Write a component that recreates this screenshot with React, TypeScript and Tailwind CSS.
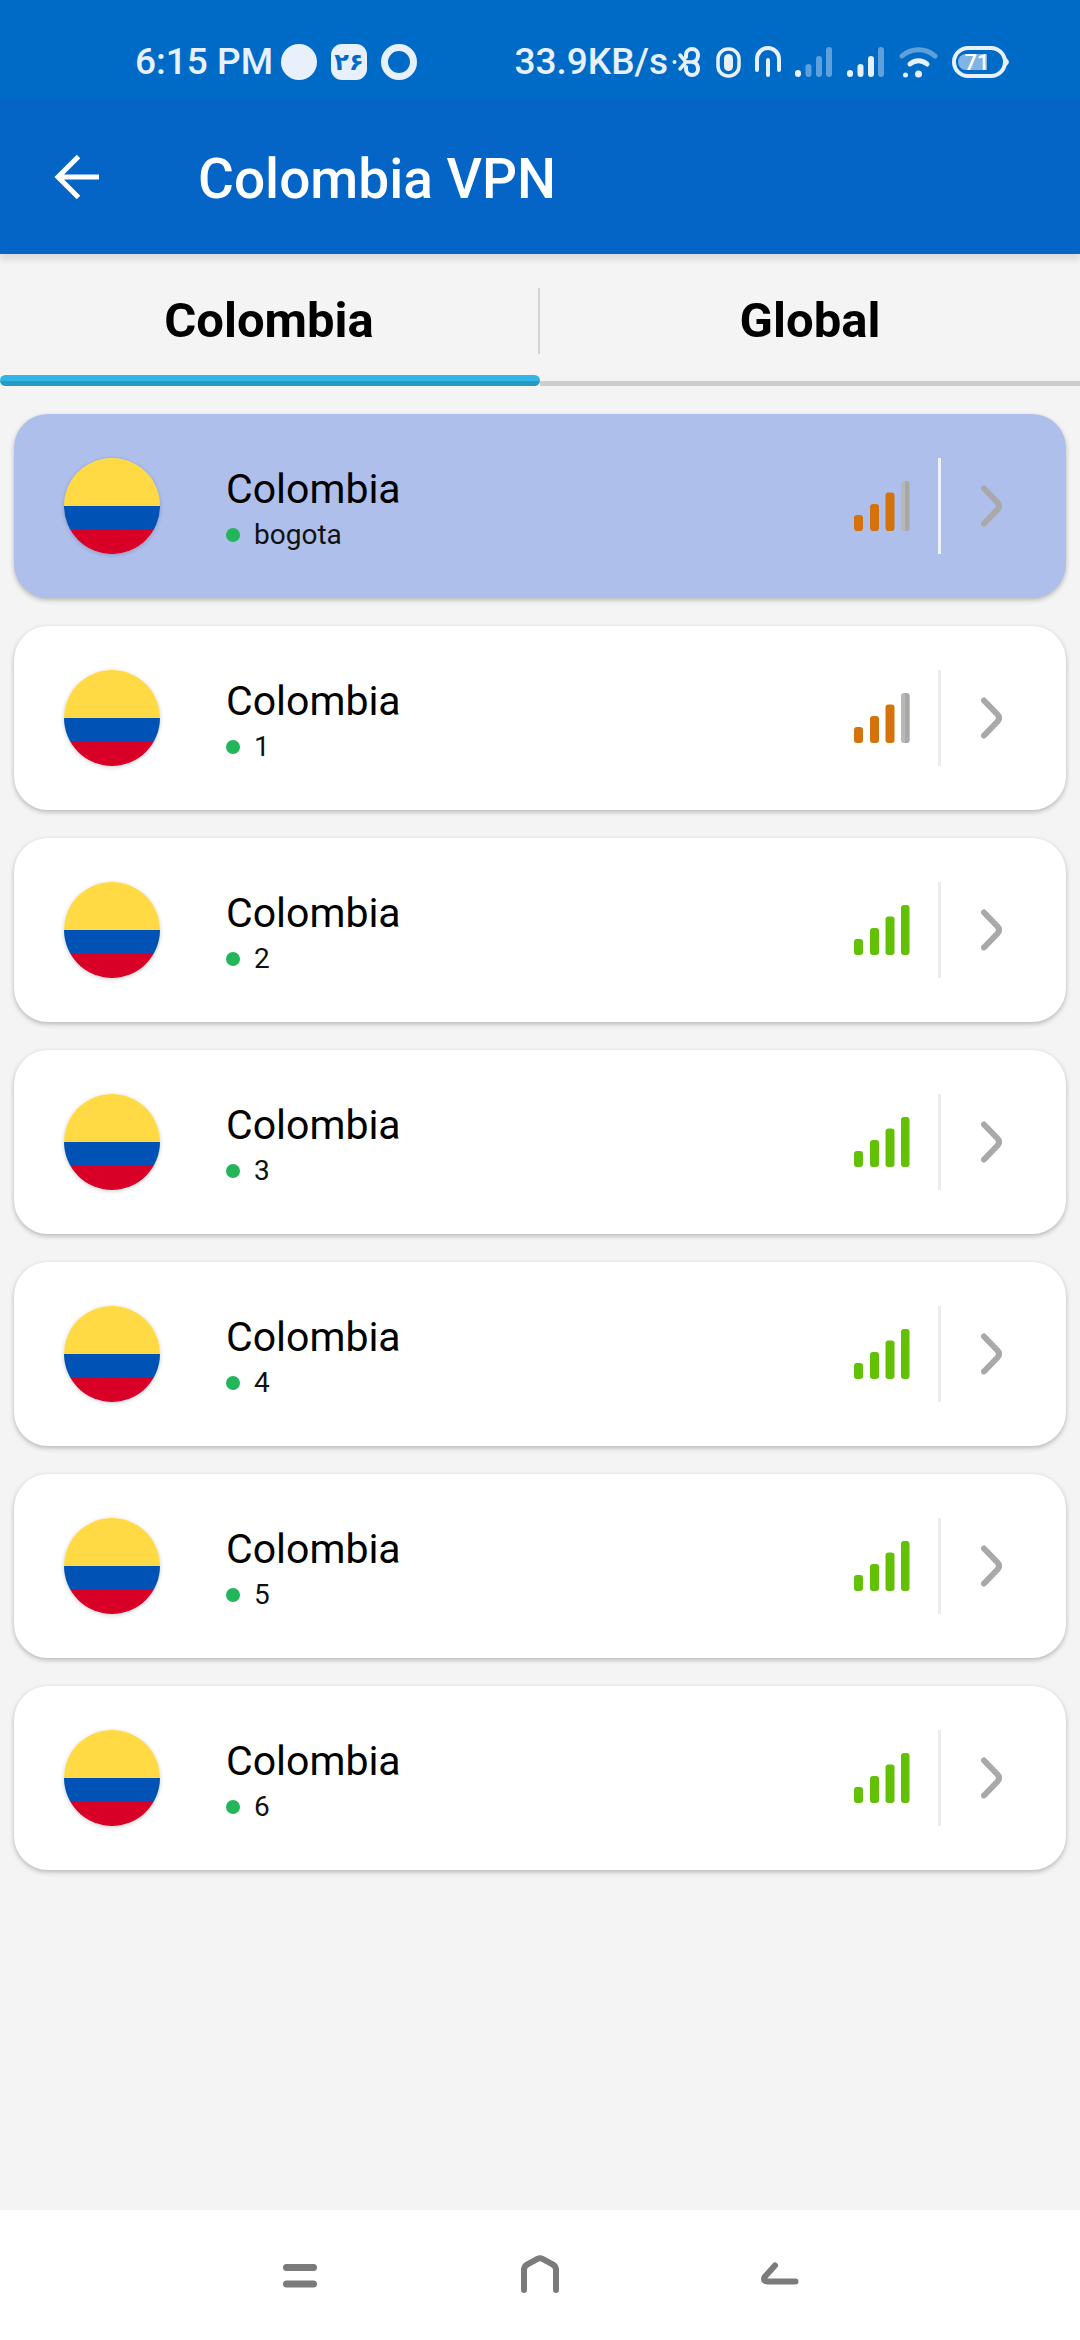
import { useState } from "react";

type Server = {
  id: string;
  country: string;
  city: string;
  bars: 3 | 4;
};

const servers: Server[] = [
  { id: "co-bogota", country: "Colombia", city: "bogota", bars: 3 },
  { id: "co-1", country: "Colombia", city: "1", bars: 3 },
  { id: "co-2", country: "Colombia", city: "2", bars: 4 },
  { id: "co-3", country: "Colombia", city: "3", bars: 4 },
  { id: "co-4", country: "Colombia", city: "4", bars: 4 },
  { id: "co-5", country: "Colombia", city: "5", bars: 4 },
  { id: "co-6", country: "Colombia", city: "6", bars: 4 },
];

const tabs = ["Colombia", "Global"];

function CellSignal({ strength }: { strength: number }) {
  const dim = (n: number) => (strength >= n ? 1 : 0.4);
  return (
    <svg width="38" height="32" viewBox="0 0 38 32" fill="#e8f1fb" aria-hidden="true">
      <rect x="0" y="24" width="6" height="7" rx="3" />
      <rect x="10.500" y="18" width="6" height="13" rx="3" opacity={dim(2)} />
      <rect x="21" y="10" width="6" height="21" rx="3" opacity={dim(3)} />
      <rect x="31" y="1" width="6" height="30" rx="3" opacity={dim(4)} />
    </svg>
  );
}

function StatusBar() {
  return (
    <div className="flex h-[100px] items-center justify-between bg-[#006bc7] pt-6 pr-[70px] pl-[135px] text-[#e8f1fb]">
      <div className="flex items-center gap-3.5">
        <div className="flex items-center gap-2">
          <span className="text-[37px] leading-10 font-medium">6:15 PM</span>
          <span className="size-9 rounded-full bg-[#e8f1fb]" />
        </div>
        <span className="flex size-9 items-center justify-center rounded-[11px] bg-[#e8f1fb] font-['DejaVu_Sans',sans-serif] text-[24px] leading-9 font-bold text-[#006bc7]">
          ۲۶
        </span>
        <span className="size-9 rounded-full border-[7px] border-[#e8f1fb]" />
      </div>

      <div className="flex items-center gap-3.5">
        <div className="flex items-center gap-1">
          <span className="text-[37px] leading-10 font-medium">33.9KB/s</span>
          <svg width="30" height="32" viewBox="0 0 30 32" fill="none" stroke="#e8f1fb" strokeWidth="4" strokeLinecap="round" aria-hidden="true">
            <path d="M14 11V9a6 6 0 0 1 12 0c0 4-2 7-6 7c4 0 6 3 6 7a6 6 0 0 1-12 0v-2" />
            <path d="M8 9l6 7l-6 7M14 16h6" strokeWidth="3.500" />
            <circle cx="2.500" cy="16" r="2" fill="#e8f1fb" stroke="none" />
          </svg>
        </div>
        <svg width="25" height="32" viewBox="0 0 25 32" fill="none" aria-hidden="true">
          <rect x="2" y="3" width="21" height="27" rx="10" stroke="#e8f1fb" strokeWidth="3.500" />
          <rect x="8" y="8" width="9" height="17" rx="4.500" fill="#e8f1fb" />
        </svg>
        <svg width="26" height="32" viewBox="0 0 26 32" fill="none" stroke="#e8f1fb" strokeWidth="4" strokeLinecap="round" aria-hidden="true">
          <path d="M2 24V13a11 11 0 0 1 22 0v11M13 14v15" />
        </svg>
        <CellSignal strength={1} />
        <CellSignal strength={3} />
        <svg width="39" height="32" viewBox="0 0 39 32" fill="none" stroke="#e8f1fb" strokeLinecap="round" aria-hidden="true">
          <path d="M3 10C12 1.500 27 1.500 36 10" strokeWidth="5" opacity="0.4" />
          <path d="M11 18C16 13.500 23 13.500 28 18" strokeWidth="5" />
          <circle cx="19.500" cy="28" r="3.500" fill="#e8f1fb" stroke="none" />
          <circle cx="6.500" cy="29" r="2.500" fill="#e8f1fb" stroke="none" />
        </svg>
        <svg width="58" height="34" viewBox="0 0 58 34" aria-label="Battery 71%">
          <path d="M52 11c2 2 5 4 5 6s-3 4-5 6z" fill="#e8f1fb" />
          <rect x="2" y="3" width="51" height="28" rx="14" fill="none" stroke="#e8f1fb" strokeWidth="4" />
          <path d="M14 9h21v16H14a8 8 0 0 1 0-16z" fill="#e8f1fb" opacity="0.55" />
          <text x="25" y="25" textAnchor="middle" fontSize="22" fontWeight="500" fill="#ffffff">
            71
          </text>
        </svg>
      </div>
    </div>
  );
}

function Flag() {
  return (
    <span className="flex size-24 shrink-0 flex-col overflow-hidden rounded-full shadow-[0_1px_4px_rgba(0,0,0,0.2)]">
      <span className="h-12 bg-[#ffda44]" />
      <span className="h-6 bg-[#0052b4]" />
      <span className="h-6 bg-[#d80027]" />
    </span>
  );
}

function SignalBars({ bars }: { bars: 3 | 4 }) {
  const color = bars === 4 ? "#62c104" : "#d4720c";
  return (
    <svg width="56" height="50" viewBox="0 0 56 50" fill={color} aria-hidden="true">
      <rect x="0" y="34" width="9" height="16" rx="3" />
      <rect x="16" y="23" width="9" height="27" rx="3" />
      <rect x="31.500" y="11.500" width="9" height="38.500" rx="3" />
      <rect x="47" y="0" width="8.500" height="50" rx="3" fill={bars === 4 ? color : "#b8b8b6"} />
      {bars === 3 && <path d="M51 0h1.500a3 3 0 0 1 3 3v44a3 3 0 0 1-3 3H51z" fill="#a8a8a6" />}
    </svg>
  );
}

function ServerCard({
  server,
  selected,
  onSelect,
}: {
  server: Server;
  selected: boolean;
  onSelect: () => void;
}) {
  return (
    <button
      type="button"
      onClick={onSelect}
      aria-pressed={selected}
      className={`flex h-[184px] w-full items-center rounded-[34px] pr-16 pl-[50px] text-left shadow-[0_2px_5px_rgba(0,0,0,0.26)] ${
        selected ? "bg-[#afbfeb]" : "bg-white"
      }`}
    >
      <Flag />
      <span className="ml-[66px] flex flex-1 flex-col gap-1 pt-1.5">
        <span className="text-[41px] leading-12 text-black">{server.country}</span>
        <span className="flex items-center gap-3.5 text-[28px] leading-9 text-[#111111]">
          <span className="size-3.5 rounded-full bg-[#22b559]" />
          {server.city}
        </span>
      </span>
      <SignalBars bars={server.bars} />
      <span className={`ml-7 h-24 w-[3px] ${selected ? "bg-[#eef2fc]" : "bg-[#ececec]"}`} />
      <svg
        className="ml-10"
        width="21"
        height="42"
        viewBox="0 0 21 42"
        fill="none"
        stroke="#a9a9a9"
        strokeWidth="6"
        strokeLinecap="round"
        aria-hidden="true"
      >
        <path d="M3 3.500L16.500 17.500Q19.500 21 16.500 24.500L3 38.500" />
      </svg>
    </button>
  );
}

function NavBar() {
  return (
    <nav className="flex h-[130px] items-center justify-center gap-[120px] bg-white">
      <button type="button" aria-label="Recent apps" className="flex w-[120px] justify-center">
        <svg width="40" height="40" viewBox="0 0 40 40" stroke="#7b7b7b" strokeWidth="7" strokeLinecap="round">
          <path d="M6.500 12.500h27M6.500 29h27" />
        </svg>
      </button>
      <button type="button" aria-label="Home" className="flex w-[120px] justify-center">
        <svg width="40" height="40" viewBox="0 0 40 40" fill="none" stroke="#7b7b7b" strokeWidth="6" strokeLinecap="round">
          <path d="M4 35V15Q4 11.500 7 9.500L17.500 3.800Q20 2.500 22.500 3.800L33 9.500Q36 11.500 36 15V35" />
        </svg>
      </button>
      <button type="button" aria-label="Back" className="flex w-[120px] justify-center">
        <svg width="40" height="40" viewBox="0 0 40 40" fill="none" stroke="#7b7b7b" strokeWidth="6" strokeLinecap="round">
          <path d="M15 10.500L5 21.500C3 24.500 4.500 26.500 7 26.500H35.500" />
        </svg>
      </button>
    </nav>
  );
}

export default function App() {
  const [tab, setTab] = useState("Colombia");
  const [selected, setSelected] = useState("co-bogota");

  return (
    <div className="flex min-h-screen flex-col bg-[#f4f4f4] font-['Roboto',sans-serif]">
      <StatusBar />

      <header className="flex h-[154px] items-center bg-[#0465c6] pl-[54px] text-white shadow-[0_6px_6px_rgba(0,0,0,0.1)]">
        <button type="button" aria-label="Go back">
          <svg width="46" height="46" viewBox="0 0 46 46" fill="none" stroke="#ffffff" strokeWidth="5">
            <path d="M45 23H4M24.500 2.500L4 23L24.500 43.500" />
          </svg>
        </button>
        <h1 className="ml-[98px] pt-1 text-[55px] leading-16 font-medium">Colombia VPN</h1>
      </header>

      <div role="tablist" className="flex h-[132px]">
        {tabs.map((name, i) => (
          <div key={name} className="flex flex-1 flex-col justify-end">
            <div className="flex flex-1 items-center pt-3">
              <button
                type="button"
                role="tab"
                aria-selected={tab === name}
                onClick={() => setTab(name)}
                className="flex-1 text-center text-[49px] leading-16 font-bold text-black"
              >
                {name}
              </button>
              {i === 0 && <span className="h-[66px] w-0.5 bg-[#d4d4d4]" />}
            </div>
            {tab === name ? (
              <span className="h-[11px] rounded-full bg-linear-to-b from-[#33b5e5] from-50% to-[#2699c4] to-60%" />
            ) : (
              <span className="mt-1.5 h-[5px] bg-[#cdcdcd]" />
            )}
          </div>
        ))}
      </div>

      <main className="flex-1 px-3.5 py-7">
        <ul className="flex flex-col gap-7">
          {servers.map((server) => (
            <li key={server.id}>
              <ServerCard
                server={server}
                selected={server.id === selected}
                onSelect={() => setSelected(server.id)}
              />
            </li>
          ))}
        </ul>
      </main>

      <NavBar />
    </div>
  );
}
